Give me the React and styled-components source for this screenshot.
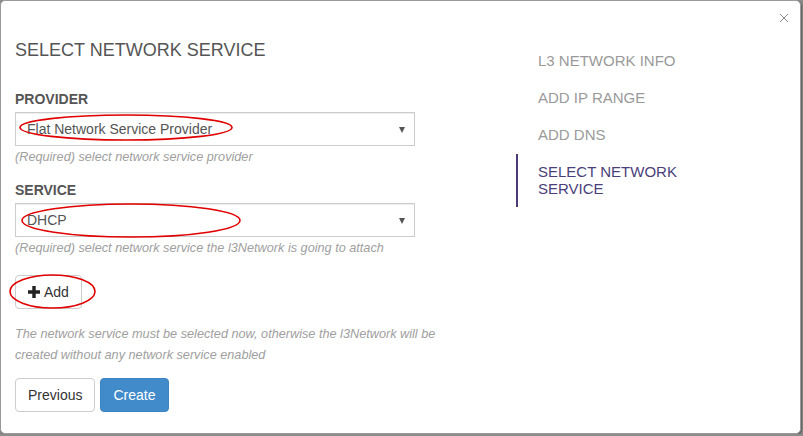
import styled, { createGlobalStyle } from "styled-components";

const Global = createGlobalStyle`
  html, body {
    margin: 0;
    padding: 0;
    background: #8c8c8c;
  }
  body {
    font-family: "Liberation Sans", Arial, sans-serif;
    font-size: 14px;
    color: #333;
  }
  * { box-sizing: border-box; }
`;

const Modal = styled.div`
  position: relative;
  width: 801px;
  height: 434px;
  background: #fff;
  border: 1px solid #9a9a9a;
  border-radius: 5px;
  box-shadow: 1px 1px 2px rgba(0, 0, 0, 0.35);
  display: flex;
  padding: 0 14px;
`;

const Close = styled.button`
  position: absolute;
  top: 9px;
  right: 8px;
  border: none;
  background: none;
  padding: 0;
  width: 16px;
  height: 16px;
  display: flex;
  align-items: center;
  justify-content: center;
  cursor: pointer;
`;

const Main = styled.div`
  width: 460px;
  padding-top: 39px;
  display: flex;
  flex-direction: column;
`;

const Title = styled.h3`
  margin: 0 0 29px;
  font-size: 18px;
  line-height: 20px;
  font-weight: 400;
  color: #555;
`;

const Label = styled.label`
  display: block;
  font-size: 14px;
  line-height: 20px;
  font-weight: 700;
  color: #555;
  margin-bottom: 3px;
`;

const Select = styled.div`
  position: relative;
  width: 400px;
  height: 34px;
  border: 1px solid #ccc;
  box-shadow: inset 0 1px 1px rgba(0, 0, 0, 0.075);
  display: flex;
  align-items: center;
  justify-content: space-between;
  padding: 0 9px 0 11px;
  color: #555;
  font-size: 14px;
`;

const Caret = styled.span`
  width: 0;
  height: 0;
  border-left: 3.5px solid transparent;
  border-right: 3.5px solid transparent;
  border-top: 6px solid #555;
  margin-top: 1px;
`;

const Help = styled.p`
  margin: 3px 0 0;
  font-size: 12.7px;
  line-height: 17px;
  font-style: italic;
  color: #a0a0a0;
`;

const Field = styled.div`
  margin-bottom: ${(p) => p.$gap || 0}px;
`;

const Button = styled.button`
  position: relative;
  height: 34px;
  padding: 0 12px;
  font-family: inherit;
  font-size: 14px;
  border-radius: 4px;
  border: 1px solid ${(p) => (p.$primary ? "#3c84c4" : "#ccc")};
  background: ${(p) => (p.$primary ? "#428bca" : "#fff")};
  color: ${(p) => (p.$primary ? "#fff" : "#333")};
  display: inline-flex;
  align-items: center;
  gap: 4px;
  cursor: pointer;
`;

const AddRow = styled.div`
  margin-top: 18px;
  display: flex;
`;

const Note = styled.p`
  margin: 15px 0 0;
  font-size: 12.7px;
  line-height: 21px;
  font-style: italic;
  color: #a0a0a0;
`;

const Actions = styled.div`
  margin-top: 12px;
  display: flex;
  gap: 5px;
`;

const Ring = styled.svg`
  position: absolute;
  overflow: visible;
  pointer-events: none;
`;

const Steps = styled.ul`
  list-style: none;
  margin: 0 0 0 41px;
  padding: 42px 0 0;
  width: 200px;
`;

const Step = styled.li`
  font-size: 15px;
  line-height: 17px;
  color: ${(p) => (p.$active ? "#4a3f7a" : "#9a9a9a")};
  padding: ${(p) => (p.$active ? "9px 0 10px 20px" : "9px 0 11px 20px")};
  border-left: 2px solid ${(p) => (p.$active ? "#4e3a78" : "transparent")};
  width: ${(p) => (p.$active ? "170px" : "auto")};
`;

function Ellipse({ x, y, w, h }) {
  return (
    <Ring style={{ left: x, top: y }} width={w} height={h}>
      <ellipse cx={w / 2} cy={h / 2} rx={w / 2} ry={h / 2} fill="none" stroke="#e00000" strokeWidth="1.6" />
    </Ring>
  );
}

function Plus() {
  return (
    <svg width="12" height="12" viewBox="0 0 12 12">
      <path d="M4.3 0h3.4v4.3H12v3.4H7.7V12H4.3V7.7H0V4.3h4.3z" fill="#222" />
    </svg>
  );
}

export default function App() {
  return (
    <>
      <Global />
      <Modal>
        <Close aria-label="close">
          <svg width="10" height="10" viewBox="0 0 10 10">
            <path d="M1 1l8 8M9 1l-8 8" stroke="#888" strokeWidth="1" />
          </svg>
        </Close>
        <Main>
          <Title>SELECT NETWORK SERVICE</Title>
          <Field $gap={14}>
            <Label>PROVIDER</Label>
            <Select>
              <span>Flat Network Service Provider</span>
              <Caret />
              <Ellipse x={4} y={2} w={212} h={25} />
            </Select>
            <Help>(Required) select network service provider</Help>
          </Field>
          <Field>
            <Label>SERVICE</Label>
            <Select>
              <span>DHCP</span>
              <Caret />
              <Ellipse x={6} y={0} w={218} h={33} />
            </Select>
            <Help>(Required) select network service the l3Network is going to attach</Help>
          </Field>
          <AddRow>
            <Button>
              <Plus />
              Add
              <Ellipse x={-6} y={-1} w={85} h={33} />
            </Button>
          </AddRow>
          <Note>
            The network service must be selected now, otherwise the l3Network will be
            <br />
            created without any network service enabled
          </Note>
          <Actions>
            <Button>Previous</Button>
            <Button $primary>Create</Button>
          </Actions>
        </Main>
        <Steps>
          <Step>L3 NETWORK INFO</Step>
          <Step>ADD IP RANGE</Step>
          <Step>ADD DNS</Step>
          <Step $active>SELECT NETWORK SERVICE</Step>
        </Steps>
      </Modal>
    </>
  );
}
